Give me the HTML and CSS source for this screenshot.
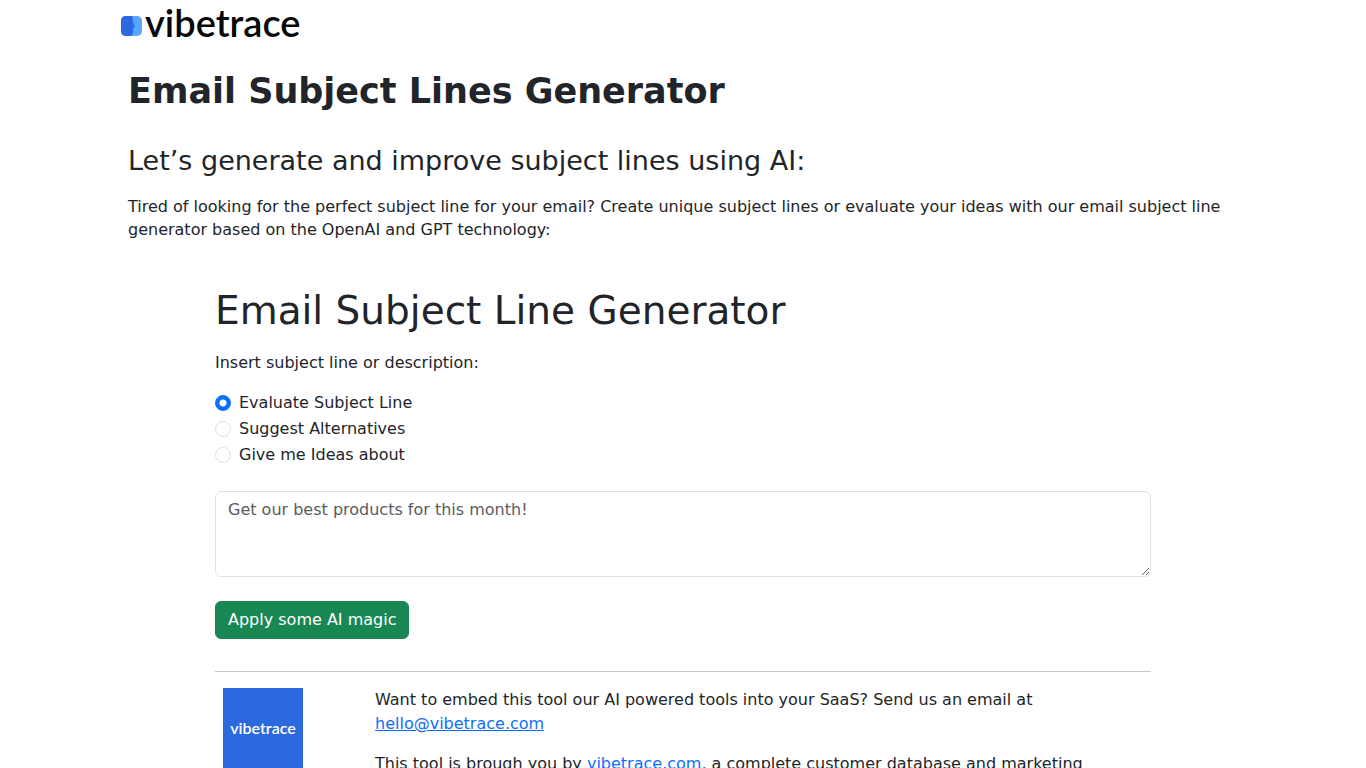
FILE: index.html
```html
<!DOCTYPE html>
<html lang="en">
<head>
<meta charset="utf-8">
<meta name="viewport" content="width=device-width, initial-scale=1">
<title>Email Subject Lines Generator</title>
<link rel="stylesheet" href="styles.css">
</head>
<body>
<header class="site-header">
  <a class="brand" href="#" aria-label="vibetrace">
    <svg class="brand-mark" viewBox="0 0 21 20" aria-hidden="true">
      <rect width="21" height="20" rx="5" fill="#58a6ff"/>
      <path d="M5 0H11Q12 2 12 6L14 10L12 13Q13 17 10 20H5Q0 20 0 15V5Q0 0 5 0Z" fill="#2d69de"/>
    </svg>
    <span class="brand-name">vibetrace</span>
  </a>
</header>
<main class="page">
  <h1 class="page-title">Email Subject Lines Generator</h1>
  <h2 class="page-subtitle">Let’s generate and improve subject lines using AI:</h2>
  <p class="intro">Tired of looking for the perfect subject line for your email? Create unique subject lines or evaluate your ideas with our email subject line generator based on the OpenAI and GPT technology:</p>
  <section class="tool">
    <h2 class="tool-title">Email Subject Line Generator</h2>
    <form class="tool-form">
      <label class="prompt" for="subject">Insert subject line or description:</label>
      <div class="options">
        <label class="option"><input class="radio" type="radio" name="mode" checked>Evaluate Subject Line</label>
        <label class="option"><input class="radio" type="radio" name="mode">Suggest Alternatives</label>
        <label class="option"><input class="radio" type="radio" name="mode">Give me Ideas about</label>
      </div>
      <textarea class="subject" id="subject" rows="3" placeholder="Get our best products for this month!"></textarea>
      <button class="submit" type="button">Apply some AI magic</button>
    </form>
    <footer class="about">
      <div class="about-logo"><span class="tile">vibetrace</span></div>
      <div class="about-text">
        <p class="about-line">Want to embed this tool our AI powered tools into your SaaS? Send us an email at <a class="link" href="#">hello@vibetrace.com</a></p>
        <p class="about-line">This tool is brough you by <a class="link" href="#">vibetrace.com</a>, a complete customer database and marketing</p>
      </div>
    </footer>
  </section>
</main>
</body>
</html>
```
FILE: styles.css
```css
* { box-sizing: border-box; }
body {
  margin: 0;
  background: #fff;
  color: #212529;
  font: 16px/24px "DejaVu Sans", sans-serif;
}
.site-header {
  max-width: 1124px;
  margin: 0 auto;
}
.brand {
  display: inline-flex;
  align-items: center;
  gap: 3px;
  height: 44px;
  color: #080808;
  text-decoration: none;
}
.brand-mark { width: 21px; height: 20px; margin-top: 8px; }
.brand-name { font: 600 38px/40px Lato, sans-serif; }
.page {
  max-width: 1110px;
  margin: 0 auto;
  padding-top: 25px;
}
.page-title { margin: 0 0 26px; font-size: 35px; line-height: 44px; font-weight: 700; }
.page-subtitle { margin: 0 0 12px; font-size: 27px; line-height: 44px; font-weight: 400; }
.intro { margin: 0; line-height: 23px; }
.tool { max-width: 936px; margin: 46px auto 0; }
.tool-title { margin: 0 0 16px; font-size: 39px; line-height: 48px; font-weight: 400; }
.tool-form {
  display: flex;
  flex-direction: column;
  align-items: flex-start;
}
.prompt { margin-bottom: 16px; }
.options { display: grid; gap: 2px; margin-bottom: 24px; }
.option { display: flex; align-items: center; gap: 8px; }
.radio {
  appearance: none;
  width: 16px;
  height: 16px;
  margin: 0;
  border: 1px solid #dee2e6;
  border-radius: 50%;
  background: #fff;
}
.radio:checked {
  border-color: #0d6efd;
  background: radial-gradient(circle, #fff 3px, #0d6efd 4px);
}
.subject {
  width: 100%;
  height: 86px;
  padding: 6px 12px;
  border: 1px solid #dee2e6;
  border-radius: 6px;
  background: #fff;
  color: inherit;
  font: inherit;
  resize: vertical;
}
.subject::placeholder { color: #595c5f; opacity: 1; }
.submit {
  margin-top: 24px;
  padding: 6px 12px;
  border: 1px solid #198754;
  border-radius: 6px;
  background: #198754;
  color: #fff;
  font: inherit;
}
.about {
  display: grid;
  grid-template-columns: 2fr 10fr;
  margin: 32px -12px 0;
  position: relative;
  padding-top: 17px;
}
.about::before {
  content: "";
  position: absolute;
  top: 0;
  left: 12px;
  right: 12px;
  border-top: 1px solid #c7c8c9;
}
.about-logo { padding-left: 20px; }
.tile {
  display: flex;
  align-items: center;
  justify-content: center;
  width: 80px;
  height: 80px;
  background: #2d69de;
  color: #fff;
  font: 600 16px/20px Lato, sans-serif;
}
.about-text { padding: 0 12px; }
.about-line { margin: 0 0 16px; }
.link { color: #0d6efd; text-decoration: underline; }
```
